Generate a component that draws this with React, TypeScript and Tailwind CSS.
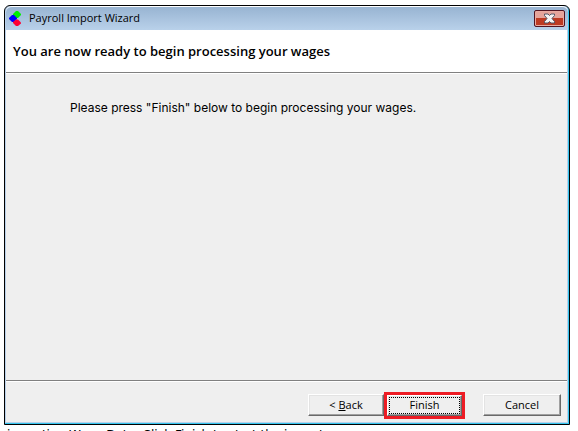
import React from 'react'

const Logo = () => (
  <svg width="12" height="16" viewBox="0 0 12 16" aria-hidden="true">
    <path d="M7 0h2l3 3v1L9 7H7L4 4V3z" fill="#00f000" />
    <path d="M3 4h2l3 3v1l-3 3H3L0 8V7z" fill="#0000ff" />
    <path d="M7 8.500h2l3 3v1L9 15H7l-3-3v-1z" fill="#ff0033" />
  </svg>
)

const CloseIcon = () => (
  <svg width="13" height="11" viewBox="0 0 13 11" aria-hidden="true">
    <path
      d="M1.500 1h3.500l1.500 1.500L8 1h3.500v1.500L9 5.500l2.500 3V10H8L6.500 8.500 5 10H1.500V8.500l2.500-3-2.500-3z"
      fill="#f4f4f4"
      stroke="#535666"
    />
  </svg>
)

const bevel =
  'border border-t-white border-l-white border-r-[#696969] border-b-[#696969] bg-[#efefef] shadow-[inset_-1px_-1px_0_#a0a0a0,inset_1px_1px_0_#e3e3e3]'

const App = () => {
  return (
    <div className="flex h-screen flex-col overflow-hidden bg-white pt-[5px] pr-2 pl-1 font-['Open_Sans',sans-serif] text-black">
      <div className="flex flex-1 flex-col rounded-t-md border border-black bg-[#b9d1ea] px-px pb-0.5 shadow-[inset_-1px_-1px_0_#35c5ee]">
        <header className="flex h-6 shrink-0 items-center rounded-t-md border-t border-white bg-linear-to-b from-[#98b4d2] to-[#b9d1ea] px-[3px]">
          <Logo />
          <h1 className="ml-2 flex-1 text-[11px]">Payroll Import Wizard</h1>
          <button
            aria-label="Close"
            className="flex h-[17px] w-[31px] items-center justify-center rounded-xs border border-[#501522] bg-linear-to-b from-[#e5a49b] from-50% to-[#bd3a22] to-50% shadow-[inset_0_0_0_1px_#e9aaa0]"
          >
            <CloseIcon />
          </button>
        </header>

        <main className="mr-px flex flex-1 flex-col bg-[#efefef]">
          <div className="flex h-[43px] items-center border-b border-[#808080] bg-white px-[7px] pt-0.5">
            <h2 className="text-[13px] font-semibold">You are now ready to begin processing your wages</h2>
          </div>
          <div className="flex-1 border-t border-white px-16 pt-6 font-['Inter','Liberation_Sans',sans-serif] text-xs leading-5">
            <p>Please press "Finish" below to begin processing your wages.</p>
          </div>
          <footer className="flex h-[42px] items-center justify-end border-t border-[#808080] pt-[7px] pr-1.5 text-[11px] leading-4 shadow-[inset_0_1px_0_white]">
            <button className={`${bevel} h-[22px] w-[76px]`}>
              &lt; <u>B</u>ack
            </button>
            <div className="border-3 border-[#ed1c24]">
              <button className={`${bevel} flex h-[21px] w-[75px] p-px`}>
                <span className="h-[17px] flex-1 border border-dotted border-black leading-[13px]">Finish</span>
              </button>
            </div>
            <button className={`${bevel} ml-[18px] h-[22px] w-[78px]`}>Cancel</button>
          </footer>
        </main>
      </div>
      <p className="h-1.5 pt-0.5 pl-[3px] font-['DejaVu_Sans',sans-serif] text-xs leading-4 whitespace-nowrap">
        importing Wage Data. Click Finish to start the import
      </p>
    </div>
  )
}

export default App
